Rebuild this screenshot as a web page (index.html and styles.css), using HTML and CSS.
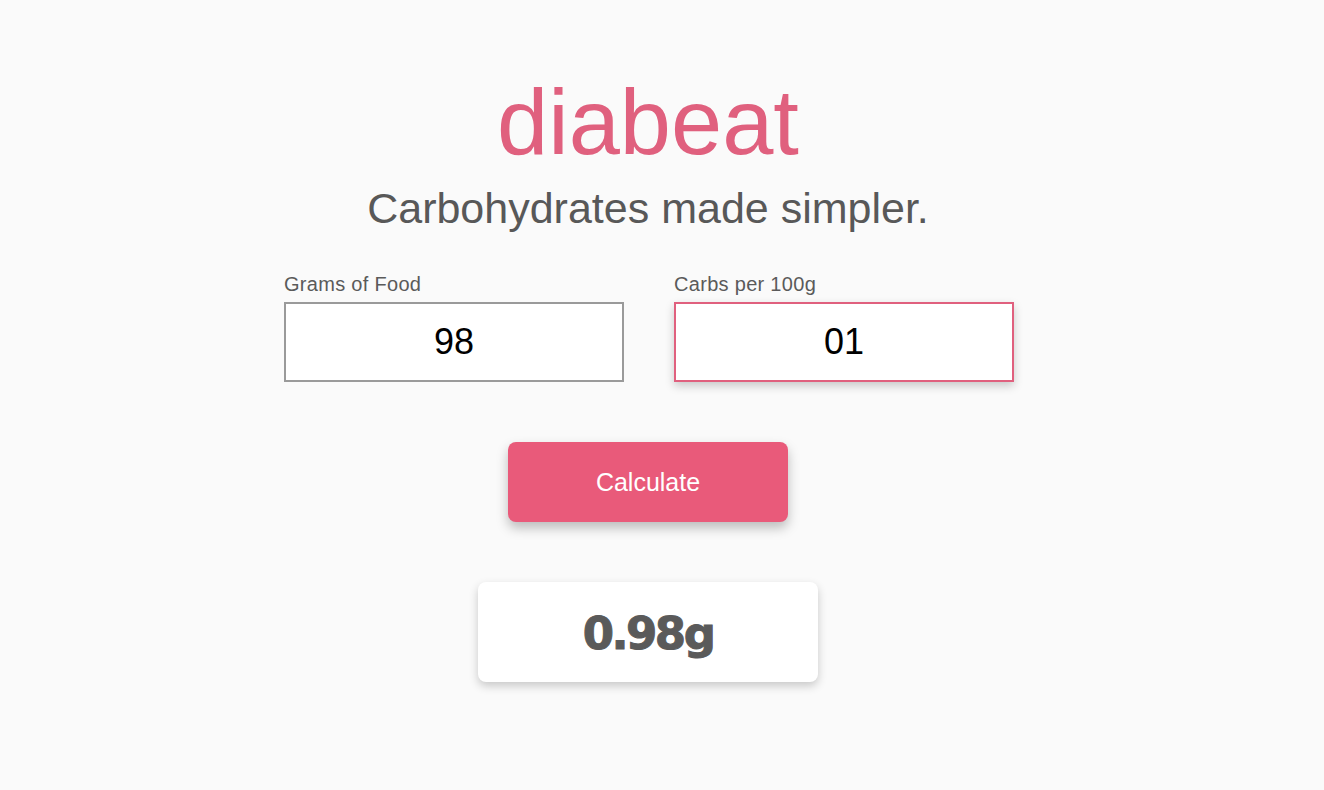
FILE: index.html
```html
<!DOCTYPE html>
<html lang="en">
<head>
<meta charset="utf-8">
<title>diabeat</title>
<link rel="stylesheet" href="styles.css">
</head>
<body>
<main class="page">
  <h1 class="brand">diabeat</h1>
  <p class="tagline">Carbohydrates made simpler.</p>
  <form class="fields">
    <label class="field">
      <span class="field-label">Grams of Food</span>
      <input class="field-input" type="text" value="98">
    </label>
    <label class="field">
      <span class="field-label">Carbs per 100g</span>
      <input class="field-input is-focused" type="text" value="01">
    </label>
  </form>
  <button class="calc-btn" type="button">Calculate</button>
  <div class="result">0.98g</div>
</main>
</body>
</html>
```
FILE: styles.css
```css
html, body {
  margin: 0;
  padding: 0;
  background: #fafafa;
}

body {
  font-family: "Liberation Sans", Arial, sans-serif;
  color: #5a5a5a;
  min-height: 790px;
}

.page {
  display: flex;
  flex-direction: column;
  align-items: center;
  padding: 76px 28px 40px 0;
}

.brand {
  margin: 0;
  font-size: 92px;
  line-height: 1;
  font-weight: 400;
  color: #e0607e;
  letter-spacing: 0;
}

.tagline {
  margin: 19px 0 0;
  font-size: 43px;
  line-height: 1;
  color: #585858;
  letter-spacing: 0;
}

.fields {
  display: flex;
  gap: 50px;
  margin: 44px 0 0;
  padding-left: 2px;
}

.field {
  display: flex;
  flex-direction: column;
  gap: 8px;
}

.field-label {
  font-size: 20px;
  line-height: 1;
  color: #5a5a5a;
  letter-spacing: 0.3px;
}

.field-input {
  box-sizing: border-box;
  width: 340px;
  height: 80px;
  margin: 0;
  border: 2px solid #9a9a9a;
  background: #fff;
  font-family: "Liberation Sans", Arial, sans-serif;
  font-size: 36px;
  color: #000;
  text-align: center;
  outline: none;
  padding: 0;
}

.field-input.is-focused {
  border-color: #e0607e;
  box-shadow: 0 4px 9px rgba(0, 0, 0, 0.2);
}

.calc-btn {
  margin-top: 60px;
  width: 280px;
  height: 80px;
  border: none;
  border-radius: 8px;
  background: #e95a7a;
  color: #fff;
  font-family: "Liberation Sans", Arial, sans-serif;
  font-size: 25px;
  box-shadow: 0 6px 12px rgba(0, 0, 0, 0.25);
  padding: 0;
}

.result {
  margin-top: 60px;
  width: 340px;
  height: 100px;
  border-radius: 8px;
  background: #fff;
  box-shadow: 0 4px 10px rgba(0, 0, 0, 0.2);
  display: flex;
  align-items: center;
  justify-content: center;
  padding-top: 2px;
  box-sizing: border-box;
  font-family: "DejaVu Sans", sans-serif;
  font-weight: 700;
  font-size: 45px;
  letter-spacing: -2.5px;
  -webkit-text-stroke: 1px #5a5a5a;
  color: #5a5a5a;
}
```
